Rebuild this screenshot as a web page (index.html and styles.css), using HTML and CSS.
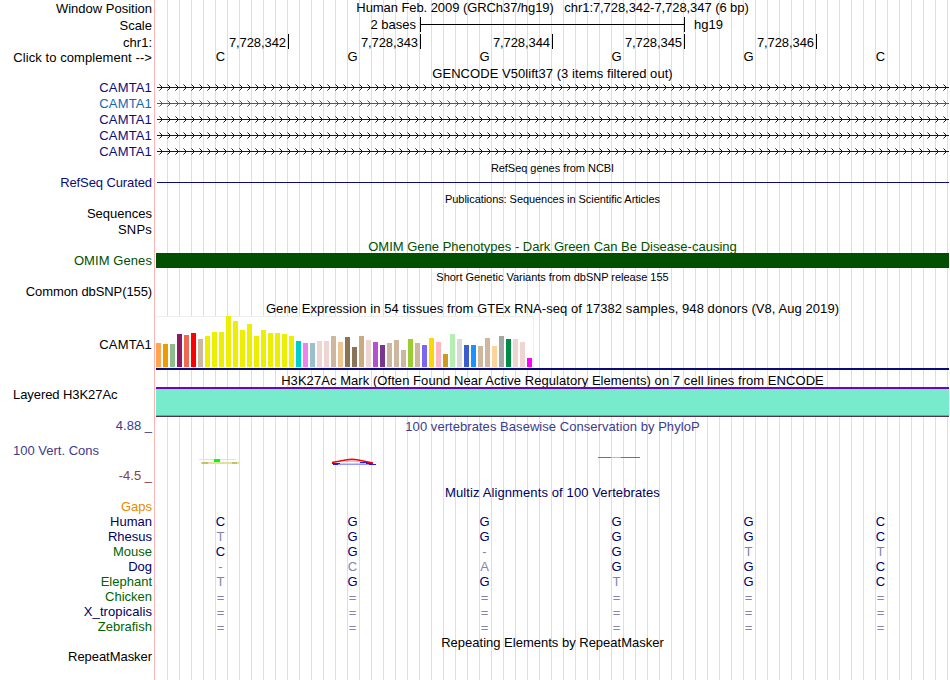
FILE: index.html
```html
<!DOCTYPE html>
<html lang="en">
<head>
<meta charset="utf-8">
<title>Genome browser chr1:7,728,342-7,728,347</title>
<link rel="stylesheet" href="styles.css">
</head>
<body>
<svg class="defs" width="0" height="0">
  <defs>
    <g id="chev"><path d="M2 4h1v1h-1zM2 10h1v1h-1z" opacity=".55"/><path d="M3 5h1v1h-1zM4 6h1v1h-1zM5 7h1v1h-1zM4 8h1v1h-1zM3 9h1v1h-1z"/></g>
    <pattern id="navy" x="1" width="8" height="16" patternUnits="userSpaceOnUse"><use href="#chev" fill="#0c0c78"/></pattern>
    <pattern id="blue" x="1" width="8" height="16" patternUnits="userSpaceOnUse"><use href="#chev" fill="#1468af"/></pattern>
  </defs>
</svg>
<main class="browser">
  <div class="row h17 low"><span class="label">Window Position</span><div class="track title t-human">Human Feb. 2009 (GRCh37/hg19) &nbsp; chr1:7,728,342-7,728,347 (6 bp)</div></div>
  <div class="row h17 low"><span class="label">Scale</span><div class="track scale"><span class="scale-text">2 bases</span><span class="scale-bar"></span><span class="assembly">hg19</span></div></div>
  <div class="row h15 low"><span class="label">chr1:</span><div class="track ruler"><span>7,728,342</span><span>7,728,343</span><span>7,728,344</span><span>7,728,345</span><span>7,728,346</span></div></div>
  <div class="row low"><span class="label t-click">Click to complement --&gt;</span><div class="track bases" data-seq="CGGGGC"></div></div>
  <div class="row h15"><div class="track title down t-gencode">GENCODE V50lift37 (3 items filtered out)</div></div>
  <div class="row navy"><span class="label gene">CAMTA1</span><svg class="track" width="793" height="16"><path d="M1 7.5h792" stroke="#0c0c78"/><rect x="1" width="792" height="16" fill="url(#navy)"/></svg></div>
  <div class="row blue"><span class="label gene">CAMTA1</span><svg class="track" width="793" height="16"><path d="M1 7.5h792" stroke="#1468af"/><rect x="1" width="792" height="16" fill="url(#blue)"/></svg></div>
  <div class="row navy"><span class="label gene">CAMTA1</span><svg class="track" width="793" height="16"><path d="M1 7.5h792" stroke="#0c0c78"/><rect x="1" width="792" height="16" fill="url(#navy)"/></svg></div>
  <div class="row navy"><span class="label gene">CAMTA1</span><svg class="track" width="793" height="16"><path d="M1 7.5h792" stroke="#0c0c78"/><rect x="1" width="792" height="16" fill="url(#navy)"/></svg></div>
  <div class="row navy"><span class="label gene">CAMTA1</span><svg class="track" width="793" height="16"><path d="M1 7.5h792" stroke="#0c0c78"/><rect x="1" width="792" height="16" fill="url(#navy)"/></svg></div>
  <div class="row h15"><div class="track title small t-refseq">RefSeq genes from NCBI</div></div>
  <div class="row navy"><span class="label t-curated">RefSeq Curated</span><svg class="track" width="793" height="16"><path d="M1 7.5h792" stroke="#0c0c78"/></svg></div>
  <div class="row h15"><div class="track title small t-pubs">Publications: Sequences in Scientific Articles</div></div>
  <div class="row"><span class="label">Sequences</span></div>
  <div class="row"><span class="label t-snps">SNPs</span></div>
  <div class="row h15 green"><div class="track title down">OMIM Gene Phenotypes - Dark Green Can Be Disease-causing</div></div>
  <div class="row green"><span class="label t-og">OMIM Genes</span><div class="track omim"></div></div>
  <div class="row h15"><div class="track title small t-snp">Short Genetic Variants from dbSNP release 155</div></div>
  <div class="row"><span class="label t-common">Common dbSNP(155)</span></div>
  <div class="row"><div class="track title down t-gtex">Gene Expression in 54 tissues from GTEx RNA-seq of 17382 samples, 948 donors (V8, Aug 2019)</div></div>
  <div class="row gtex"><span class="label gene">CAMTA1</span><div class="track expression"><div class="bars" id="bars"></div></div></div>
  <div class="row h14"><div class="track title t-h3k">H3K27Ac Mark (Often Found Near Active Regulatory Elements) on 7 cell lines from ENCODE</div></div>
  <div class="row h30"><span class="label left t-layered">Layered H3K27Ac</span><div class="track h3k"></div></div>
  <div class="row cons">
    <div class="label cons-labels"><span class="max">4.88 _</span><span class="name">100 Vert. Cons</span><span class="min">-4.5 _</span></div>
    <div class="track">
      <div class="title t-phylo">100 vertebrates Basewise Conservation by PhyloP</div>
      <svg class="logos" width="793" height="51" fill="none">
        <path d="M43 27.5h37" stroke="#c0f8c8"/><path d="M58 27h6v3h-6z" fill="#0f0"/>
        <path d="M45 31h38" stroke="#e2e09c" stroke-width="2"/><path d="M46 31h6M76 31h5" stroke="#c3c364" stroke-width="2"/>
        <path d="M182 31.5h30" stroke="#c8ccff"/><path d="M179 32.5h36" stroke="#9696ff"/><path d="M176 31.5h8M177 32.5h5M204 30.5h12M210 31.5h7M213 32.5h7" stroke="#1e1ef0"/>
        <path d="M176 30.5L191 27.7Q196 27 201 27.7L217 31" stroke="#f00" stroke-width="1.6"/><path d="M190 29.5h14" stroke="#ffb4b4"/>
        <path d="M442 25.5h42" stroke="#6464f0"/><path d="M455 25.5h10" stroke="#aab4ff"/>
      </svg>
    </div>
  </div>
  <div class="row h15 deep"><div class="track title down t-multiz">Multiz Alignments of 100 Vertebrates</div></div>
  <div class="row h15 gaps"><span class="label">Gaps</span></div>
  <div class="row h15 deep"><span class="label">Human</span><div class="track bases" data-seq="CGGGGC"></div></div>
  <div class="row h15 deep"><span class="label">Rhesus</span><div class="track bases" data-seq="tGGGGC"></div></div>
  <div class="row h15 forest"><span class="label">Mouse</span><div class="track bases" data-seq="CG-Gtt"></div></div>
  <div class="row h15 deep"><span class="label">Dog</span><div class="track bases" data-seq="-caGGC"></div></div>
  <div class="row h15 forest"><span class="label">Elephant</span><div class="track bases" data-seq="tGGtGC"></div></div>
  <div class="row h15 forest"><span class="label">Chicken</span><div class="track bases low-signs" data-seq="======"></div></div>
  <div class="row h15 deep"><span class="label t-xt">X_tropicalis</span><div class="track bases low-signs" data-seq="======"></div></div>
  <div class="row h15 forest"><span class="label">Zebrafish</span><div class="track bases low-signs" data-seq="======"></div></div>
  <div class="row h15"><div class="track title down">Repeating Elements by RepeatMasker</div></div>
  <div class="row"><span class="label t-rm">RepeatMasker</span></div>
</main>
<script src="script.js"></script>
</body>
</html>
```
FILE: script.js
```js
// Median expression per tissue: [bar height, colour].
const tissues = [
  [24, "#ffa54f"], [23, "#ee9a00"], [23, "#8fbc8f"], [33, "#8b1c62"], [32, "#ee6a50"], [34, "#ff0000"],
  [28, "#cdb79e"], [31, "#eeee00"], [35, "#eeee00"], [35, "#eeee00"], [51, "#eeee00"], [46, "#eeee00"],
  [37, "#eeee00"], [43, "#eeee00"], [31, "#eeee00"], [37, "#eeee00"], [34, "#eeee00"], [34, "#eeee00"],
  [33, "#eeee00"], [31, "#eeee00"], [26, "#00cdcd"], [24, "#ee82ee"], [24, "#9ac0cd"], [26, "#eed5d2"],
  [26, "#eed5d2"], [31, "#cdb79e"], [25, "#eec591"], [30, "#8b7355"], [20, "#8b7355"], [31, "#cdaa7d"],
  [27, "#eed5d2"], [25, "#b452cd"], [22, "#7a378b"], [24, "#cdb79e"], [27, "#cdb79e"], [17, "#cdb79e"],
  [28, "#9acd32"], [24, "#cdb79e"], [22, "#7a67ee"], [29, "#ffd700"], [25, "#ffb6c1"], [13, "#cd9b1d"],
  [33, "#b4eeb4"], [28, "#d9d9d9"], [22, "#3a5fcd"], [22, "#1e90ff"], [21, "#cdb79e"], [29, "#cdb79e"],
  [21, "#ffd39b"], [31, "#a6a6a6"], [28, "#008b45"], [28, "#eed5d2"], [25, "#eed5d2"], [9, "#ff00ff"]
];
document.getElementById("bars").innerHTML = tissues
  .map(([h, c]) => `<i style="height:${h}px;background:${c}"></i>`).join("");

// Lower-case bases differ from the human sequence and are drawn faded.
for (const row of document.querySelectorAll(".bases")) {
  row.innerHTML = [...row.dataset.seq].map(b =>
    `<span${/[A-Z]/.test(b) ? "" : ' class="faded"'}>${b.toUpperCase()}</span>`).join("");
}
```
FILE: styles.css
```css
body {
  margin: 0;
  background: #fff;
  color: #000;
  font: 13px/15px "Liberation Sans", Arial, Helvetica, sans-serif;
}
.defs { display: block; }
.browser {
  width: 949px;
  height: 680px;
  overflow: hidden;
  background:
    linear-gradient(#ffb4b4, #ffb4b4) 154px 0 / 1px 100% no-repeat,
    repeating-linear-gradient(90deg, #dcdcfa 0 1px, transparent 1px 12px) 167px 0 / 782px 100% no-repeat;
}
.row {
  display: grid;
  grid-template-columns: 152px 793px;
  column-gap: 4px;
  height: 16px;
  white-space: nowrap;
}
.h14 { height: 14px; }
.h15 { height: 15px; }
.h17 { height: 17px; }
.h30 { height: 30px; }
.label { grid-column: 1; text-align: right; }
.low .label, .down { padding-top: 1px; }
.label.left { text-align: left; padding-left: 13px; }
.track { grid-column: 2; display: block; }
.title { text-align: center; }
.small { font-size: 11px; padding-top: 1px; }
.navy { color: #0c0c78; }
.blue { color: #1468af; }
.green { color: #005000; }
.deep { color: #000064; }
.forest { color: #006400; }
.gaps { color: #e68a00; }

/* Tracking per caption */
.gene { letter-spacing: .15px; }
.t-click { letter-spacing: .08px; }
.t-curated, .t-common { letter-spacing: -.1px; }
.t-layered { letter-spacing: -.07px; }
.t-rm { letter-spacing: -.05px; }
.t-xt { letter-spacing: .08px; }
.t-og { letter-spacing: .08px; }
.t-snps { letter-spacing: .2px; }
.t-human { letter-spacing: -.07px; }
.t-gencode { letter-spacing: .05px; }
.t-refseq { letter-spacing: -.04px; }
.t-pubs { letter-spacing: -.06px; }
.t-snp { letter-spacing: -.02px; }
.t-gtex { letter-spacing: .065px; }
.t-h3k { letter-spacing: .06px; }
.t-phylo { letter-spacing: .05px; }
.t-multiz { letter-spacing: .11px; }

.scale { display: flex; }
.scale-text { width: 260px; margin-right: 4px; text-align: right; }
.scale-bar {
  width: 263px;
  height: 15px;
  border: solid #000;
  border-width: 0 1px;
  background: linear-gradient(#000, #000) 0 7px / 100% 1px no-repeat;
}
.assembly { margin-left: 9px; }
.ruler { display: flex; }
.ruler span {
  box-sizing: border-box;
  width: 132px;
  height: 15px;
  padding: 1px 2px 0 0;
  border-right: 1px solid #000;
  text-align: right;
  letter-spacing: -.08px;
}
.ruler span:first-child { width: 133px; }
.bases { display: flex; color: #000064; }
.low .bases { color: #000; }
.bases span { width: 132px; text-align: center; text-indent: -3px; }
.bases .faded { color: #8282b4; }
.low-signs { padding-top: 1px; }

.omim { height: 15px; background: #005000; }
.gtex { height: 57px; }
.gtex .label { padding-top: 21px; }
.expression {
  height: 52px;
  border-bottom: 2px solid #0c0c78;
}
.bars {
  box-sizing: border-box;
  display: flex;
  align-items: flex-end;
  gap: 2px;
  width: 378px;
  height: 52px;
  background: #fff;
  border: solid #eee;
  border-width: 1px 1px 1px 0;
}
.bars i { width: 5px; flex: none; }
.h3k {
  box-sizing: border-box;
  height: 30px;
  border-top: 2px solid #6e00c8;
  border-bottom: 1px solid #50324b;
  background: linear-gradient(#64b478, #64b478) 0 100% / 100% 1px no-repeat #78ebcd;
}
.cons { height: 67px; }
.cons-labels { display: flex; flex-direction: column; color: #3c3c8c; }
.max { padding-top: 1px; }
.name { padding: 10px 0 10px 13px; text-align: left; }
.min { color: #8c3c3c; }
.t-phylo { padding-top: 2px; height: 13px; color: #3c3c8c; }
.logos { display: block; }
```
